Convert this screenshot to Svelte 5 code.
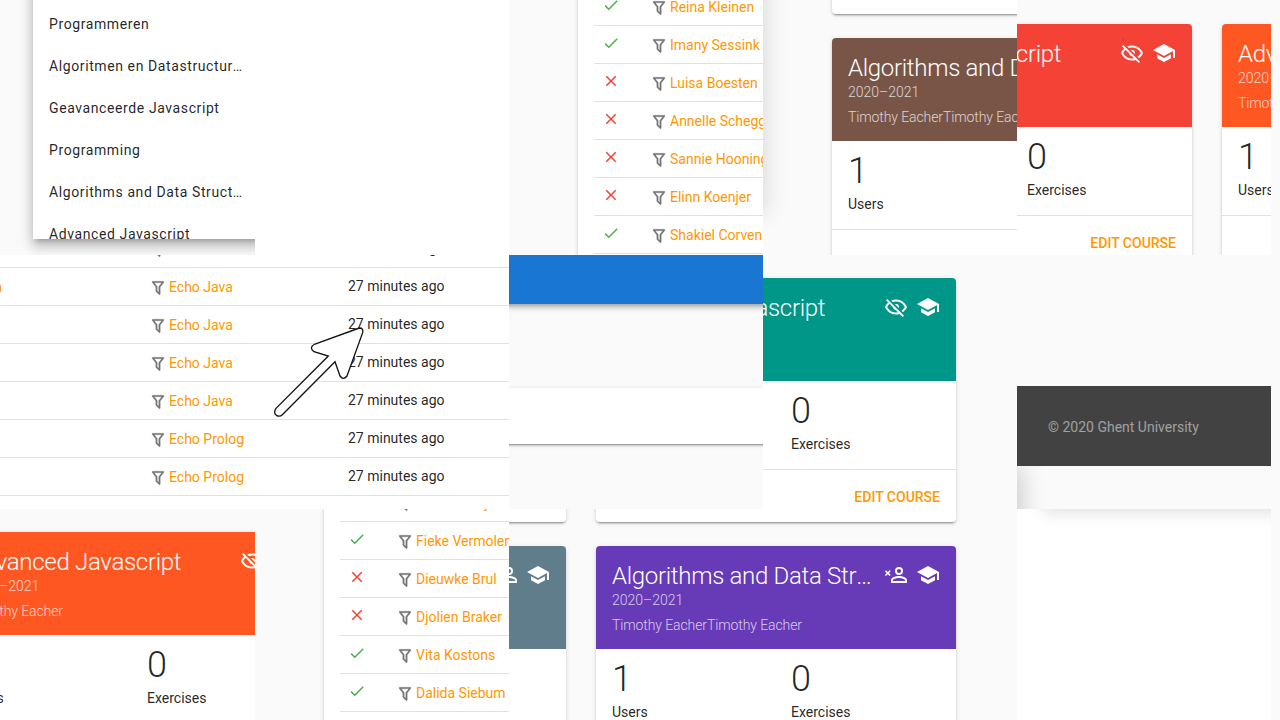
<script>
  const check = 'M21,7L9,19L3.5,13.5L4.91,12.09L9,16.17L19.59,5.59L21,7Z';
  const close = 'M19,6.41L17.59,5L12,10.59L6.41,5L5,6.41L10.59,12L5,17.59L6.41,19L12,13.41L17.59,19L19,17.59L13.41,12L19,6.41Z';
  const funnel = 'M15,19.88C15.04,20.18 14.94,20.5 14.71,20.71C14.32,21.1 13.69,21.1 13.3,20.71L9.29,16.7C9.06,16.47 8.96,16.16 9,15.87V10.75L4.21,4.62C3.87,4.19 3.95,3.56 4.38,3.22C4.57,3.08 4.78,3 5,3V3H19V3C19.22,3 19.43,3.08 19.62,3.22C20.05,3.56 20.13,4.19 19.79,4.62L15,10.75V19.88M7.04,5L11,10.06V15.58L13,17.58V10.05L16.96,5H7.04Z';
  const school = 'M12,3L1,9L12,15L21,10.09V17H23V9M5,13.18V17.18L12,21L19,17.18V13.18L12,17L5,13.18Z';
  const eyeOff = 'M2,5.27L3.28,4L20,20.72L18.73,22L15.65,18.92C14.5,19.3 13.28,19.5 12,19.5C7,19.5 2.73,16.39 1,12C1.69,10.24 2.79,8.69 4.19,7.46L2,5.27M12,9A3,3 0 0,1 15,12C15,12.35 14.94,12.69 14.83,13L11,9.17C11.31,9.06 11.65,9 12,9M12,4.5C17,4.5 21.27,7.61 23,12C22.18,14.08 20.79,15.88 19,17.19L17.58,15.76C18.94,14.82 20.06,13.54 20.82,12C19.17,8.64 15.76,6.5 12,6.5C10.91,6.5 9.84,6.68 8.84,7L7.3,5.47C8.74,4.85 10.33,4.5 12,4.5M3.18,12C4.83,15.36 8.24,17.5 12,17.5C12.69,17.5 13.37,17.43 14,17.29L11.72,15C10.29,14.85 9.15,13.71 9,12.28L5.6,8.87C4.61,9.72 3.78,10.78 3.18,12Z';
  const personX = 'M15,4A4,4 0 0,0 11,8A4,4 0 0,0 15,12A4,4 0 0,0 19,8A4,4 0 0,0 15,4M15,5.9C16.16,5.9 17.1,6.84 17.1,8C17.1,9.16 16.16,10.1 15,10.1A2.1,2.1 0 0,1 12.9,8A2.1,2.1 0 0,1 15,5.9M15,13C12.33,13 7,14.33 7,17V20H23V17C23,14.33 17.67,13 15,13M15,14.9C17.97,14.9 21.1,16.36 21.1,17V18.1H8.9V17C8.9,16.36 12,14.9 15,14.9M2,7.2L0.9,8.3L2.7,10.1L0.9,11.9L2,13L3.8,11.2L5.6,13L6.7,11.9L4.9,10.1L6.7,8.3L5.6,7.2L3.8,9Z';

  const menuItems = ['Programmeren', 'Algoritmen en Datastructuren', 'Geavanceerde Javascript', 'Programming', 'Algorithms and Data Structures', 'Advanced Javascript'];

  const topRows = [[true, 'Reina Kleinen'], [true, 'Imany Sessink'], [false, 'Luisa Boesten'], [false, 'Annelle Scheggetman'], [false, 'Sannie Hooningh'], [false, 'Elinn Koenjer'], [true, 'Shakiel Corven']];
  const lowRows = [[true, 'Anouk Kooy'], [true, 'Fieke Vermolen'], [false, 'Dieuwke Brul'], [false, 'Djolien Braker'], [true, 'Vita Kostons'], [true, 'Dalida Siebum']];
  const subs = [['', 'Echo Java'], ['Shakiel Corven', 'Echo Java'], ['', 'Echo Java'], ['', 'Echo Java'], ['', 'Echo Java'], ['', 'Echo Prolog'], ['', 'Echo Prolog']];

  const ADV = 'Advanced Javascript';
  const ALG = 'Algorithms and Data Structures';
  const TE = 'Timothy Eacher';
</script>

{#snippet icon(d, cls)}
  <svg class={cls} viewBox="0 0 24 24" aria-hidden="true"><path d={d} /></svg>
{/snippet}

{#snippet card(tone, title, teacher, users, extra)}
  <article class="card">
    <header class="head {tone}">
      <div class="head-top">
        <h2 class="title">{title}</h2>
        {@render icon(extra, 'hicon')}
        {@render icon(school, 'hicon')}
      </div>
      <div class="sub">2020–2021</div>
      <div class="sub teacher">{teacher}</div>
    </header>
    <div class="stats">
      <div class="stat"><div class="num">{users}</div><div class="lab">Users</div></div>
      <div class="stat"><div class="num">0</div><div class="lab">Exercises</div></div>
    </div>
    <div class="actions"><span class="edit">EDIT COURSE</span></div>
  </article>
{/snippet}

{#snippet status(ok)}
  {@render icon(ok ? check : close, ok ? 'st ok' : 'st bad')}
{/snippet}

{#snippet filterName(name)}
  <span class="fname">
    {@render icon(funnel, 'fil')}
    <span class="link">{name}</span>
  </span>
{/snippet}

<main class="mosaic">
  <section class="tile t-menu">
    <div class="menu">
      {#each menuItems as item}
        <div class="mitem"><span class="mtext">{item}</span></div>
      {/each}
    </div>
  </section>

  <section class="tile white"></section>

  <section class="tile pad-table">
    <div class="tcard top-a">
      {#each topRows as [ok, name]}
        <div class="srow">
          {@render status(ok)}
          {@render filterName(name)}
        </div>
      {/each}
    </div>
  </section>

  <section class="tile t-d">
    <div class="ghost ghost-d"></div>
    <div class="stack">
      {@render card('purple', ALG, TE + TE, 1, personX)}
      {@render card('brown', ALG, TE + TE, 1, personX)}
    </div>
  </section>

  <section class="tile t-e">
    {@render card('red', ADV, TE, 1, eyeOff)}
    {@render card('deep', ADV, TE, 1, eyeOff)}
  </section>

  <div class="tile blank"></div>

  <section class="tile t-f">
    {#each subs as [who, ex]}
      <div class="xrow">
        <span class="who link">{who}</span>
        {@render filterName(ex)}
        <span class="time">27 minutes ago</span>
      </div>
    {/each}
    <svg class="arrow" viewBox="0 0 330 315" aria-hidden="true">
      <path d="M283 24L150 72Q130 82 147 95L190 108L33 265Q24 278 34 286Q44 292 52 284L210 125L225 168Q235 182 246 168L293 38Q296 24 283 24Z" />
    </svg>
  </section>

  <section class="tile t-g">
    <div class="bluebar"></div>
    <div class="band"></div>
  </section>

  <section class="tile t-h">
    {@render card('teal', ADV, TE, 1, eyeOff)}
  </section>

  <section class="tile t-i">
    <div class="ghost ghost-i"></div>
    <footer class="foot">© 2020 Ghent University</footer>
  </section>

  <div class="tile blank"></div>

  <section class="tile t-j">
    {@render card('deep', ADV, TE, 1, eyeOff)}
  </section>

  <section class="tile pad-table2">
    <div class="tcard low-a">
      {#each lowRows as [ok, name]}
        <div class="srow">
          {@render status(ok)}
          {@render filterName(name)}
        </div>
      {/each}
    </div>
  </section>

  <section class="tile t-l">
    <div class="cards">
      {@render card('indigo', ADV, TE, 1, eyeOff)}
      {@render card('teal', ADV, TE, 1, eyeOff)}
      {@render card('slate', 'Programming', TE, 1, personX)}
      {@render card('violet', ALG, TE + TE, 1, personX)}
    </div>
  </section>

  <section class="tile t-m">
    <div class="ghost ghost-m"></div>
  </section>

  <div class="tile blank"></div>
</main>

<style>
  :global(body) {
    margin: 0;
    background: #fafafa;
    font-family: Roboto, "Liberation Sans", sans-serif;
    color: rgba(0, 0, 0, 0.87);
  }
  .mosaic {
    display: grid;
    grid-template-columns: 255px 254px 254px 254px 254px 9px;
    grid-template-rows: 255px 254px 211px;
    width: 1280px;
    height: 720px;
    overflow: hidden;
  }
  .tile {
    position: relative;
    overflow: hidden;
    min-width: 0;
    min-height: 0;
    background: #fafafa;
  }
  .white { background: #fff; }

  /* menu */
  .t-menu { padding-left: 33px; }
  .menu {
    width: 260px;
    height: 279px;
    margin-top: -40px;
    padding-top: 43px;
    box-sizing: border-box;
    background: #fff;
    overflow: hidden;
    box-shadow: 0 5px 5px -3px rgba(0,0,0,.2), 0 8px 10px 1px rgba(0,0,0,.14), 0 3px 14px 2px rgba(0,0,0,.12);
  }
  .mitem {
    height: 42px;
    display: flex;
    align-items: center;
    padding-left: 16px;
    font-size: 14px;
    letter-spacing: 0.6px;
  }
  .mtext {
    width: 195px;
    overflow: hidden;
    white-space: nowrap;
    text-overflow: ellipsis;
  }

  /* tables */
  .pad-table { padding-left: 69px; }
  .pad-table2 { padding-left: 69px; }
  .tcard {
    width: 300px;
    padding: 0 16px;
    background: #fff;
    box-shadow: 0 3px 1px -2px rgba(0,0,0,.2), 0 2px 2px 0 rgba(0,0,0,.14), 0 1px 5px 0 rgba(0,0,0,.12);
  }
  .top-a { margin-top: -12px; padding-bottom: 20px; }
  .low-a { margin-top: -25px; padding-bottom: 60px; }
  .srow {
    height: 37px;
    border-bottom: 1px solid #e0e0e0;
    display: flex;
    align-items: center;
    font-size: 14px;
    white-space: nowrap;
  }
  .st {
    width: 18px;
    height: 18px;
    flex: none;
    margin: -4px 30px 0 8px;
  }
  .ok { fill: #4caf50; }
  .bad { fill: #f44336; }
  .fname {
    display: flex;
    align-items: center;
    gap: 2px;
    min-width: 0;
  }
  .fil {
    width: 18px;
    height: 18px;
    flex: none;
    margin-top: 3px;
    fill: #757575;
    stroke: #757575;
    stroke-width: 0.35;
  }
  .link { color: #ff9800; }

  .t-f { grid-column: span 2; background: #fff; }
  .xrow {
    display: grid;
    grid-template-columns: 149px 199px 1fr;
    align-items: center;
    height: 37px;
    border-bottom: 1px solid #e0e0e0;
    font-size: 14px;
    white-space: nowrap;
  }
  .xrow:first-child { margin-top: -25px; }
  .time { margin-top: -2px; }
  .who {
    display: flex;
    justify-content: flex-end;
    padding-right: 147px;
  }
  .arrow {
    position: absolute;
    left: 265px;
    top: 65px;
    width: 110px;
    height: 105px;
    fill: #fff;
    stroke: #111;
    stroke-width: 4;
  }

  /* cards */
  .card {
    width: 360px;
    height: 244px;
    flex: none;
    display: flex;
    flex-direction: column;
    background: #fff;
    border-radius: 4px;
    box-shadow: 0 3px 1px -2px rgba(0,0,0,.2), 0 2px 2px 0 rgba(0,0,0,.14), 0 1px 5px 0 rgba(0,0,0,.12);
  }
  .head {
    height: 103px;
    box-sizing: border-box;
    padding: 16px;
    border-radius: 4px 4px 0 0;
    color: #fff;
    flex: none;
  }
  .head-top {
    display: flex;
    align-items: flex-start;
    height: 28px;
    gap: 8px;
  }
  .title {
    flex: 1;
    min-width: 0;
    margin: 0;
    font-size: 24px;
    font-weight: 300;
    line-height: 28px;
    letter-spacing: -0.3px;
    overflow: hidden;
    white-space: nowrap;
    text-overflow: ellipsis;
  }
  .hicon {
    width: 24px;
    height: 24px;
    flex: none;
    fill: #fff;
    margin-top: 1px;
  }
  .sub {
    font-size: 14px;
    font-weight: 300;
    line-height: 20px;
    color: rgba(255,255,255,.75);
  }
  .teacher { margin-top: 5px; white-space: nowrap; letter-spacing: -0.1px; }
  .stats {
    height: 89px;
    flex: none;
    box-sizing: border-box;
    padding: 12px 16px 0;
    display: grid;
    grid-template-columns: 179px 1fr;
    border-bottom: 1px solid #e0e0e0;
  }
  .num { font-size: 36px; font-weight: 300; line-height: 36px; }
  .lab { font-size: 14px; line-height: 20px; margin-top: 5px; }
  .actions {
    height: 52px;
    display: flex;
    justify-content: flex-end;
    padding: 17px 16px 0;
    box-sizing: border-box;
  }
  .edit {
    font-size: 14px;
    font-weight: 500;
    line-height: 20px;
    color: #ff9800;
  }
  .purple { background: #673ab7; }
  .brown { background: #795548; }
  .red { background: #f44336; }
  .deep { background: #ff5722; }
  .teal { background: #009688; }
  .slate { background: #607d8b; }
  .violet { background: #673ab7; }
  .indigo { background: #3f51b5; }

  .t-d { padding-left: 69px; }
  .stack {
    display: flex;
    flex-direction: column;
    gap: 24px;
    margin-top: -230px;
  }
  .t-e {
    display: flex;
    gap: 30px;
    padding-top: 24px;
  }
  .t-e > :global(.card:first-child) { margin-left: -185px; }
  .t-h {
    display: flex;
    justify-content: flex-end;
    padding: 23px 61px 0 0;
  }
  .t-j { padding-top: 23px; }
  .t-j > :global(.card) { margin-left: -48px; }
  .t-l { grid-column: span 2; }
  .cards {
    display: grid;
    grid-template-columns: 360px 360px;
    gap: 24px 30px;
    justify-content: end;
    padding-right: 61px;
    margin-top: -231px;
  }

  /* shell pieces */
  .t-g {
    display: flex;
    flex-direction: column;
  }
  .bluebar {
    height: 49px;
    margin: 0 -10px;
    flex: none;
    background: #1976d2;
    box-shadow: 0 2px 4px -1px rgba(0,0,0,.2), 0 4px 5px 0 rgba(0,0,0,.14), 0 1px 10px 0 rgba(0,0,0,.12);
  }
  .band {
    height: 56px;
    margin: 84px -10px 0;
    flex: none;
    background: #fff;
    box-shadow: 0 3px 1px -2px rgba(0,0,0,.2), 0 2px 2px 0 rgba(0,0,0,.14), 0 1px 5px 0 rgba(0,0,0,.12);
  }
  .t-i { padding-top: 131px; }
  .foot {
    position: relative;
    height: 78px;
    padding-top: 2px;
    display: flex;
    align-items: center;
    padding-left: 31px;
    background: #424242;
    color: rgba(255,255,255,.5);
    font-size: 14px;
  }
  .t-m { background: #fff; }
  .ghost {
    position: absolute;
    background: #fff;
  }
  .ghost-d { left: -100px; width: 100px; top: -50px; height: 255px; box-shadow: 0 6px 22px 3px rgba(0,0,0,.13); }
  .ghost-i { left: -100px; width: 100px; top: 211px; height: 300px; box-shadow: 0 6px 24px 4px rgba(0,0,0,.2); }
  .ghost-m { left: 28px; right: -60px; top: -100px; height: 96px; box-shadow: 0 6px 16px 2px rgba(0,0,0,.12); }
</style>
